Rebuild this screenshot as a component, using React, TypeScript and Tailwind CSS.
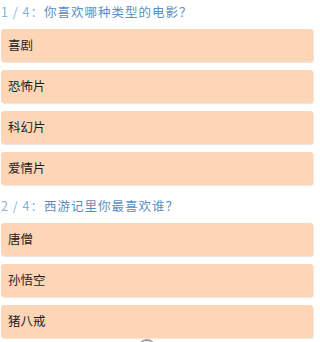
const questions = [
  { no: "1 / 4：", title: "你喜欢哪种类型的电影？", options: ["喜剧", "恐怖片", "科幻片", "爱情片"] },
  { no: "2 / 4：", title: "西游记里你最喜欢谁？", options: ["唐僧", "孙悟空", "猪八戒"] },
];

export default function App() {
  return (
    <div className="min-h-[342px] overflow-hidden bg-white pl-[1px] pr-[7px] pt-[2px] font-['Noto_Sans_CJK_SC','Noto_Sans',sans-serif]">
      {questions.map((q, qi) => (
        <section key={q.no} className={qi > 0 ? "mt-[11px]" : ""}>
          <h2 className="flex h-[20px] items-center text-[12.5px] leading-none tracking-[1px] text-[#5d8ec0]">
            <span className="text-[#86b4da]">{q.no}</span>
            <span>{q.title}</span>
          </h2>
          <div className="mt-[7px] flex flex-col gap-[8px]">
            {q.options.map((o) => (
              <div
                key={o}
                className="flex h-[33px] items-center rounded-[3px] bg-[#fdd5b7] pl-[7px] text-[12.5px] text-[#1f1f1f] shadow-[1px_1px_1px_rgba(150,110,80,0.18)]"
              >
                {o}
              </div>
            ))}
          </div>
        </section>
      ))}
      <div className="ml-[137px] mt-[1px] h-[18px] w-[18px] rounded-full border-t-2 border-[#9a9a9a]" />
    </div>
  );
}
